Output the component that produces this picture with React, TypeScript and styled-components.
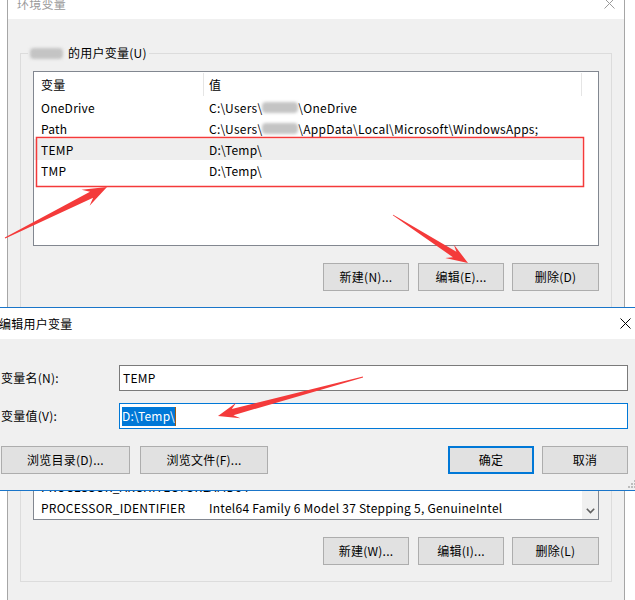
import React from "react";
import styled, { createGlobalStyle } from "styled-components";

const FONT = `"Noto Sans CJK SC", "Noto Sans", sans-serif`;
const RED = "#f43a3a";

const GlobalStyle = createGlobalStyle`
  html, body {
    margin: 0;
    background: #fff;
  }
  body {
    font-family: ${FONT};
    font-size: 12px;
    letter-spacing: 0.25px;
    color: #000;
  }
`;

const Desktop = styled.div`
  position: relative;
  width: 635px;
  height: 600px;
  overflow: hidden;
  background: #fff;
`;

/* ---------- windows ---------- */

const BackWindow = styled.div`
  position: absolute;
  left: 7px;
  top: -13px;
  width: 618px;
  height: 720px;
  box-sizing: border-box;
  border: 1px solid #a6a6a6;
  background: #f0f0f0;
  display: flex;
  flex-direction: column;
`;

const EditWindow = styled.div`
  position: absolute;
  left: -11px;
  top: 307px;
  width: 650px;
  height: 184px;
  box-sizing: border-box;
  border: 1px solid #1a75c9;
  background: #f0f0f0;
  display: flex;
  flex-direction: column;
`;

const TitleBar = styled.div<{ $pad: number }>`
  height: 31px;
  flex: none;
  background: #fff;
  display: flex;
  align-items: center;
  justify-content: space-between;
  padding-left: ${(p) => p.$pad}px;
`;

const TitleText = styled.span<{ $inactive?: boolean }>`
  font-size: 12px;
  line-height: 16px;
  color: ${(p) => (p.$inactive ? "#999" : "#000")};
`;

const CloseButton = styled.div<{ $w: number }>`
  width: ${(p) => p.$w}px;
  height: 31px;
  display: flex;
  align-items: center;
  justify-content: center;
`;

const CloseIcon = ({ color }: { color: string }) => (
  <svg width="11" height="11" viewBox="0 0 11 11">
    <path d="M0.5 0.5 L10.5 10.5 M10.5 0.5 L0.5 10.5" stroke={color} strokeWidth="1" />
  </svg>
);

/* ---------- back window body ---------- */

const BackBody = styled.div`
  flex: 1;
  padding: 0 12px;
  display: flex;
  flex-direction: column;
`;

const GroupBox = styled.fieldset<{ $top: number }>`
  margin: ${(p) => p.$top}px 0 0 0;
  padding: 10px 12px 16px 12px;
  border: 1px solid #dcdcdc;
  min-width: 0;
  display: flex;
  flex-direction: column;
`;

const Legend = styled.legend`
  margin-left: -5px;
  padding: 0 2px;
  line-height: 16px;
  height: 16px;
  display: flex;
  align-items: center;
  gap: 5px;
`;

const BlurName = styled.span<{ $w: number }>`
  display: inline-block;
  width: ${(p) => p.$w}px;
  height: 11px;
  background: #c4c4c4;
  border-radius: 4px;
  filter: blur(1.6px);
  vertical-align: middle;
`;

const ListView = styled.div`
  height: 175px;
  box-sizing: border-box;
  border: 1px solid #828790;
  background: #fff;
  display: flex;
  overflow: hidden;
`;

const ListInner = styled.div<{ $bottom?: boolean }>`
  flex: 1;
  display: flex;
  flex-direction: column;
  justify-content: ${(p) => (p.$bottom ? "flex-end" : "flex-start")};
  padding-bottom: ${(p) => (p.$bottom ? 1 : 0)}px;
`;

const HeaderRow = styled.div`
  display: grid;
  grid-template-columns: 170px 378px;
  width: 548px;
  height: 25px;
`;

const HeaderCell = styled.div<{ $pad: number }>`
  padding-left: ${(p) => p.$pad}px;
  display: flex;
  align-items: center;
  border-right: 1px solid #e5e5e5;
  margin: 1px 0 1px 0;
`;

const Row = styled.div<{ $selected?: boolean }>`
  display: grid;
  grid-template-columns: 170px 378px;
  width: 548px;
  height: 21px;
  align-items: center;
  background: ${(p) => (p.$selected ? "#eeeeee" : "transparent")};
  white-space: nowrap;
`;

const Cell = styled.div<{ $pad: number }>`
  padding-left: ${(p) => p.$pad}px;
  display: flex;
  align-items: center;
  line-height: 16px;
`;

const ScrollBar = styled.div`
  width: 17px;
  flex: none;
  margin-left: auto;
  background: #f0f0f0;
  display: flex;
  flex-direction: column;
  justify-content: flex-end;
  align-items: center;
`;

const ScrollArrow = styled.div`
  height: 17px;
  width: 17px;
  display: flex;
  align-items: center;
  justify-content: center;
`;

const ButtonRow = styled.div`
  margin-top: 17px;
  display: flex;
  justify-content: flex-end;
`;

const Button = styled.div<{ $w: number; $default?: boolean }>`
  width: ${(p) => p.$w}px;
  height: 28px;
  box-sizing: border-box;
  background: #e1e1e1;
  border: ${(p) => (p.$default ? "2px solid #0078d7" : "1px solid #adadad")};
  display: flex;
  align-items: center;
  justify-content: center;
  line-height: 16px;
  white-space: nowrap;
`;

const Spacer = styled.div<{ $w?: number }>`
  ${(p) => (p.$w ? `width: ${p.$w}px; flex: none;` : "flex: 1;")}
`;

/* ---------- edit window body ---------- */

const EditBody = styled.div`
  flex: 1;
  padding: 26px 10px 0 11px;
  display: flex;
  flex-direction: column;
`;

const Form = styled.div`
  display: grid;
  grid-template-columns: 118px 1fr;
  row-gap: 12px;
  align-items: center;
`;

const Label = styled.div`
  line-height: 16px;
`;

const Field = styled.div<{ $focused?: boolean; $pad: number }>`
  height: 26px;
  box-sizing: border-box;
  background: #fff;
  border: 1px solid ${(p) => (p.$focused ? "#0078d7" : "#7a7a7a")};
  padding-left: ${(p) => p.$pad}px;
  display: flex;
  align-items: center;
  line-height: 16px;
`;

const Selection = styled.span`
  background: #0078d7;
  color: #fff;
  height: 19px;
  display: inline-flex;
  align-items: center;
`;

const Caret = styled.span`
  width: 1px;
  height: 19px;
  background: #a05a10;
`;

const EditButtons = styled.div`
  margin-top: 17px;
  display: flex;
  align-items: center;
`;

const Grip = styled.svg`
  position: absolute;
  right: 2px;
  bottom: 2px;
`;

/* ---------- annotations ---------- */

const Overlay = styled.svg`
  position: absolute;
  left: 0;
  top: 0;
  pointer-events: none;
`;

function arrow(tx: number, ty: number, px: number, py: number, L = 22, W = 8, w = 3.2) {
  const dx = px - tx;
  const dy = py - ty;
  const len = Math.hypot(dx, dy);
  const ux = dx / len;
  const uy = dy / len;
  const nx = -uy;
  const ny = ux;
  const bx = px - ux * L;
  const by = py - uy * L;
  const sx = px - ux * L * 0.72;
  const sy = py - uy * L * 0.72;
  const pts = [
    [tx + nx * 0.4, ty + ny * 0.4],
    [sx + nx * w, sy + ny * w],
    [bx + nx * W, by + ny * W],
    [px, py],
    [bx - nx * W, by - ny * W],
    [sx - nx * w, sy - ny * w],
    [tx - nx * 0.4, ty - ny * 0.4],
  ];
  return pts.map((p) => `${p[0].toFixed(1)},${p[1].toFixed(1)}`).join(" ");
}

const Chevron = () => (
  <svg width="9" height="6" viewBox="0 0 9 6">
    <path d="M0.8 0.8 L4.5 4.6 L8.2 0.8" stroke="#606060" strokeWidth="1.6" fill="none" />
  </svg>
);

export default function App() {
  return (
    <Desktop>
      <GlobalStyle />

      <BackWindow>
        <TitleBar $pad={9}>
          <TitleText $inactive>环境变量</TitleText>
          <CloseButton $w={30}>
            <CloseIcon color="#9a9a9a" />
          </CloseButton>
        </TitleBar>
        <BackBody>
          <GroupBox $top={26}>
            <Legend>
              <BlurName $w={33} />
              <span>的用户变量(U)</span>
            </Legend>
            <ListView>
              <ListInner>
                <HeaderRow>
                  <HeaderCell $pad={7}>变量</HeaderCell>
                  <HeaderCell $pad={5}>值</HeaderCell>
                </HeaderRow>
                <Row>
                  <Cell $pad={7}>OneDrive</Cell>
                  <Cell $pad={5}>
                    {"C:\\Users\\"}
                    <BlurName $w={36} />
                    {"\\OneDrive"}
                  </Cell>
                </Row>
                <Row>
                  <Cell $pad={7}>Path</Cell>
                  <Cell $pad={5}>
                    {"C:\\Users\\"}
                    <BlurName $w={36} />
                    {"\\AppData\\Local\\Microsoft\\WindowsApps;"}
                  </Cell>
                </Row>
                <Row $selected>
                  <Cell $pad={7}>TEMP</Cell>
                  <Cell $pad={5}>{"D:\\Temp\\"}</Cell>
                </Row>
                <Row>
                  <Cell $pad={7}>TMP</Cell>
                  <Cell $pad={5}>{"D:\\Temp\\"}</Cell>
                </Row>
              </ListInner>
            </ListView>
            <ButtonRow>
              <Button $w={86}>新建(N)...</Button>
              <Spacer $w={9} />
              <Button $w={86}>编辑(E)...</Button>
              <Spacer $w={8} />
              <Button $w={87}>删除(D)</Button>
            </ButtonRow>
          </GroupBox>

          <GroupBox $top={11}>
            <Legend>
              <span>系统变量(S)</span>
            </Legend>
            <ListView>
              <ListInner $bottom>
                <Row>
                  <Cell $pad={7}>PROCESSOR_ARCHITECTURE</Cell>
                  <Cell $pad={5}>AMD64</Cell>
                </Row>
                <Row>
                  <Cell $pad={7}>PROCESSOR_IDENTIFIER</Cell>
                  <Cell $pad={5}>Intel64 Family 6 Model 37 Stepping 5, GenuineIntel</Cell>
                </Row>
              </ListInner>
              <ScrollBar>
                <ScrollArrow>
                  <Chevron />
                </ScrollArrow>
              </ScrollBar>
            </ListView>
            <ButtonRow>
              <Button $w={86}>新建(W)...</Button>
              <Spacer $w={9} />
              <Button $w={86}>编辑(I)...</Button>
              <Spacer $w={8} />
              <Button $w={87}>删除(L)</Button>
            </ButtonRow>
          </GroupBox>
        </BackBody>
      </BackWindow>

      <EditWindow>
        <TitleBar $pad={9}>
          <TitleText>编辑用户变量</TitleText>
          <CloseButton $w={26}>
            <CloseIcon color="#000" />
          </CloseButton>
        </TitleBar>
        <EditBody>
          <Form>
            <Label>变量名(N):</Label>
            <Field $pad={3}>TEMP</Field>
            <Label>变量值(V):</Label>
            <Field $focused $pad={2}>
              <Selection>{"D:\\Temp\\"}</Selection>
              <Caret />
            </Field>
          </Form>
          <EditButtons>
            <Button $w={129}>浏览目录(D)...</Button>
            <Spacer $w={10} />
            <Button $w={128}>浏览文件(F)...</Button>
            <Spacer />
            <Button $w={86} $default>
              确定
            </Button>
            <Spacer $w={8} />
            <Button $w={86}>取消</Button>
          </EditButtons>
        </EditBody>
        <Grip width="8" height="8" viewBox="0 0 8 8">
          <rect x="6" y="0" width="2" height="2" fill="#bdbdbd" />
          <rect x="3" y="3" width="2" height="2" fill="#bdbdbd" />
          <rect x="6" y="3" width="2" height="2" fill="#bdbdbd" />
          <rect x="0" y="6" width="2" height="2" fill="#bdbdbd" />
          <rect x="3" y="6" width="2" height="2" fill="#bdbdbd" />
          <rect x="6" y="6" width="2" height="2" fill="#bdbdbd" />
        </Grip>
      </EditWindow>

      <Overlay width="635" height="600" viewBox="0 0 635 600">
        <rect x="36.5" y="137.5" width="547" height="49" fill="none" stroke={RED} strokeWidth="1.5" />
        <polygon points={arrow(5, 238, 107, 187, 24, 9, 3.4)} fill={RED} />
        <polygon points={arrow(393, 215, 468, 263, 22, 8, 3.2)} fill={RED} />
        <polygon points={arrow(363, 377, 218, 416, 21, 8, 3.2)} fill={RED} />
      </Overlay>
    </Desktop>
  );
}
